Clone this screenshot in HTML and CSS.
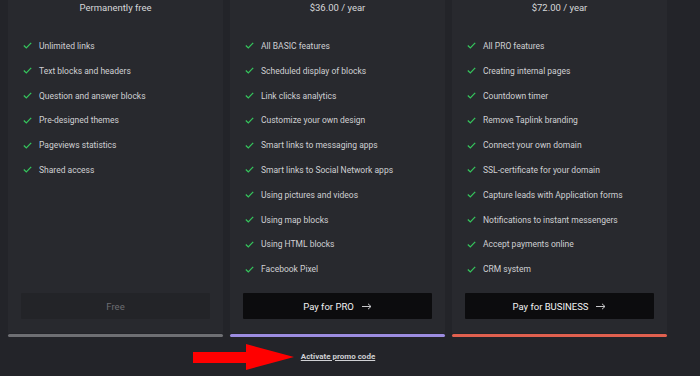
FILE: index.html
```html
<!DOCTYPE html>
<html>
<head>
  <meta name="viewport" content="width=device-width, initial-scale=1">
  <link rel="stylesheet" href="styles.css">
  <title>Pricing</title>
</head>
<body>

<div class="pricing">
  <div class="plans">

    <div class="plan">
      <div class="planBody">
        <div class="price">Permanently free</div>
        <ul class="features">
          <li><svg class="check" viewBox="0 0 9 7"><path d="M0.8 3.6 L3.3 5.9 L8.2 0.9"/></svg>Unlimited links</li>
          <li><svg class="check" viewBox="0 0 9 7"><path d="M0.8 3.6 L3.3 5.9 L8.2 0.9"/></svg>Text blocks and headers</li>
          <li><svg class="check" viewBox="0 0 9 7"><path d="M0.8 3.6 L3.3 5.9 L8.2 0.9"/></svg>Question and answer blocks</li>
          <li><svg class="check" viewBox="0 0 9 7"><path d="M0.8 3.6 L3.3 5.9 L8.2 0.9"/></svg>Pre-designed themes</li>
          <li><svg class="check" viewBox="0 0 9 7"><path d="M0.8 3.6 L3.3 5.9 L8.2 0.9"/></svg>Pageviews statistics</li>
          <li><svg class="check" viewBox="0 0 9 7"><path d="M0.8 3.6 L3.3 5.9 L8.2 0.9"/></svg>Shared access</li>
        </ul>
        <button class="planBtn disabledBtn">Free</button>
      </div>
      <div class="planBar grey"></div>
    </div>

    <div class="plan">
      <div class="planBody">
        <div class="price">$36.00 / year</div>
        <ul class="features">
          <li><svg class="check" viewBox="0 0 9 7"><path d="M0.8 3.6 L3.3 5.9 L8.2 0.9"/></svg>All BASIC features</li>
          <li><svg class="check" viewBox="0 0 9 7"><path d="M0.8 3.6 L3.3 5.9 L8.2 0.9"/></svg>Scheduled display of blocks</li>
          <li><svg class="check" viewBox="0 0 9 7"><path d="M0.8 3.6 L3.3 5.9 L8.2 0.9"/></svg>Link clicks analytics</li>
          <li><svg class="check" viewBox="0 0 9 7"><path d="M0.8 3.6 L3.3 5.9 L8.2 0.9"/></svg>Customize your own design</li>
          <li><svg class="check" viewBox="0 0 9 7"><path d="M0.8 3.6 L3.3 5.9 L8.2 0.9"/></svg>Smart links to messaging apps</li>
          <li><svg class="check" viewBox="0 0 9 7"><path d="M0.8 3.6 L3.3 5.9 L8.2 0.9"/></svg>Smart links to Social Network apps</li>
          <li><svg class="check" viewBox="0 0 9 7"><path d="M0.8 3.6 L3.3 5.9 L8.2 0.9"/></svg>Using pictures and videos</li>
          <li><svg class="check" viewBox="0 0 9 7"><path d="M0.8 3.6 L3.3 5.9 L8.2 0.9"/></svg>Using map blocks</li>
          <li><svg class="check" viewBox="0 0 9 7"><path d="M0.8 3.6 L3.3 5.9 L8.2 0.9"/></svg>Using HTML blocks</li>
          <li><svg class="check" viewBox="0 0 9 7"><path d="M0.8 3.6 L3.3 5.9 L8.2 0.9"/></svg>Facebook Pixel</li>
        </ul>
        <button class="planBtn">Pay for PRO <svg class="arrow" viewBox="0 0 10 7"><path d="M0 3.5 H9 M6 0.8 L9 3.5 L6 6.2"/></svg></button>
      </div>
      <div class="planBar purple"></div>
    </div>

    <div class="plan">
      <div class="planBody">
        <div class="price">$72.00 / year</div>
        <ul class="features">
          <li><svg class="check" viewBox="0 0 9 7"><path d="M0.8 3.6 L3.3 5.9 L8.2 0.9"/></svg>All PRO features</li>
          <li><svg class="check" viewBox="0 0 9 7"><path d="M0.8 3.6 L3.3 5.9 L8.2 0.9"/></svg>Creating internal pages</li>
          <li><svg class="check" viewBox="0 0 9 7"><path d="M0.8 3.6 L3.3 5.9 L8.2 0.9"/></svg>Countdown timer</li>
          <li><svg class="check" viewBox="0 0 9 7"><path d="M0.8 3.6 L3.3 5.9 L8.2 0.9"/></svg>Remove Taplink branding</li>
          <li><svg class="check" viewBox="0 0 9 7"><path d="M0.8 3.6 L3.3 5.9 L8.2 0.9"/></svg>Connect your own domain</li>
          <li><svg class="check" viewBox="0 0 9 7"><path d="M0.8 3.6 L3.3 5.9 L8.2 0.9"/></svg>SSL-certificate for your domain</li>
          <li><svg class="check" viewBox="0 0 9 7"><path d="M0.8 3.6 L3.3 5.9 L8.2 0.9"/></svg>Capture leads with Application forms</li>
          <li><svg class="check" viewBox="0 0 9 7"><path d="M0.8 3.6 L3.3 5.9 L8.2 0.9"/></svg>Notifications to instant messengers</li>
          <li><svg class="check" viewBox="0 0 9 7"><path d="M0.8 3.6 L3.3 5.9 L8.2 0.9"/></svg>Accept payments online</li>
          <li><svg class="check" viewBox="0 0 9 7"><path d="M0.8 3.6 L3.3 5.9 L8.2 0.9"/></svg>CRM system</li>
        </ul>
        <button class="planBtn">Pay for BUSINESS <svg class="arrow" viewBox="0 0 10 7"><path d="M0 3.5 H9 M6 0.8 L9 3.5 L6 6.2"/></svg></button>
      </div>
      <div class="planBar red"></div>
    </div>

  </div>

  <div class="promo">
    <svg class="pointer" viewBox="0 0 101 26"><polygon points="0,8 53,8 53,0 101,13 53,26 53,19 0,19"/></svg>
    <a class="promoLink" href="#">Activate promo code</a>
  </div>
</div>

</body>
</html>
```

FILE: styles.css
```css
html, body {
  margin: 0;
  height: 100%;
}

body {
  background-color: #232429;
  font-family: Roboto, 'Liberation Sans', sans-serif;
  color: #cfd0d3;
  overflow: hidden;
}

.pricing {
  width: 660px;
  padding-left: 8px;
}

.plans {
  display: flex;
  gap: 7px;
}

.plan {
  width: 215px;
  display: flex;
  flex-direction: column;
}

.planBody {
  flex: 1;
  display: flex;
  flex-direction: column;
  background-color: #28292e;
  padding: 0 13px 14px 13px;
}

.price {
  font-size: 9.5px;
  line-height: 15px;
  text-align: center;
  color: #d6d7d9;
}

.features {
  flex: 1;
  list-style: none;
  margin: 18.6px 0 0 0;
  padding: 0 0 0 2px;
}

.features li {
  height: 24.8px;
  display: flex;
  align-items: center;
  font-size: 8.5px;
}

.check {
  width: 9px;
  height: 7px;
  margin-right: 7px;
  flex-shrink: 0;
}

.check path {
  fill: none;
  stroke: #35c45c;
  stroke-width: 1.3;
}

.planBtn {
  margin-top: 11.5px;
  height: 26px;
  display: flex;
  align-items: center;
  justify-content: center;
  border: 0;
  border-radius: 1px;
  background-color: #0c0c0e;
  color: #f2f2f3;
  font-family: Roboto, 'Liberation Sans', sans-serif;
  font-size: 9.5px;
  cursor: pointer;
}

.arrow {
  width: 10px;
  height: 7px;
  margin-left: 8px;
}

.arrow path {
  fill: none;
  stroke: #c8c8ca;
  stroke-width: 1;
}

.disabledBtn {
  background-color: #232428;
  color: #6c6d72;
  cursor: default;
}

.planBar {
  height: 3px;
  margin-top: 1px;
  border-radius: 2px;
}

.grey {
  background-color: #6e6f73;
}

.purple {
  background-color: #9c8ce0;
}

.red {
  background-color: #e0604f;
}

.promo {
  position: relative;
  display: flex;
  justify-content: center;
  margin-top: 14px;
  line-height: 12px;
}

.promoLink {
  color: #cfd0d3;
  font-size: 8px;
  font-weight: bold;
  text-decoration: underline;
}

.pointer {
  position: absolute;
  left: 185px;
  top: -7px;
  width: 101px;
  height: 26px;
  fill: #ff0000;
}
```
